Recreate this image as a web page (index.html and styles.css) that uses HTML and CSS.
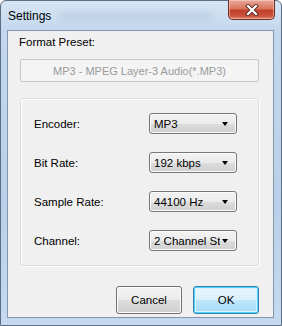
FILE: index.html
```html
<!DOCTYPE html>
<html>
<head>
<meta charset="utf-8">
<link rel="stylesheet" href="styles.css">
</head>
<body>
<div class="window">
  <div class="titlebar">
    <span class="title">Settings</span>
    <span class="title-blur"></span>
    <div class="close-btn">
      <svg width="14" height="12" viewBox="0 0 14 12">
        <path d="M3 2 L11 10 M11 2 L3 10" stroke="#5a2a22" stroke-width="4" stroke-linecap="square" fill="none"/>
        <path d="M3 2 L11 10 M11 2 L3 10" stroke="#ffffff" stroke-width="2.2" stroke-linecap="square" fill="none"/>
      </svg>
    </div>
  </div>
  <div class="client">
    <div class="preset-label">Format Preset:</div>
    <div class="preset-box">MP3 - MPEG Layer-3 Audio(*.MP3)</div>
    <div class="group">
      <div class="row">
        <span class="label">Encoder:</span>
        <div class="combo"><span class="combo-text">MP3</span><span class="arrow"></span></div>
      </div>
      <div class="row">
        <span class="label">Bit Rate:</span>
        <div class="combo"><span class="combo-text">192 kbps</span><span class="arrow"></span></div>
      </div>
      <div class="row">
        <span class="label">Sample Rate:</span>
        <div class="combo"><span class="combo-text">44100 Hz</span><span class="arrow"></span></div>
      </div>
      <div class="row">
        <span class="label">Channel:</span>
        <div class="combo"><span class="combo-text">2 Channel Stereo</span><span class="arrow"></span></div>
      </div>
    </div>
    <div class="buttons">
      <div class="btn">Cancel</div>
      <div class="btn btn-default">OK</div>
    </div>
  </div>
</div>
</body>
</html>
```

FILE: styles.css
```css
* { box-sizing: border-box; }
html, body {
  margin: 0;
  padding: 0;
  background: #ffffff;
}
body {
  font-family: "Liberation Sans", Arial, sans-serif;
  font-size: 11px;
  color: #1a1a1a;
}
.window {
  width: 282px;
  height: 326px;
  border: 1px solid #5b6f84;
  border-radius: 6px 6px 0 0;
  background: linear-gradient(180deg, #d6e5f4 0px, #c3d8ee 30px, #b8d0e9 200px, #c5daf0 326px);
  display: flex;
  flex-direction: column;
  padding: 0 7px 7px 6px;
}
.titlebar {
  height: 29px;
  display: flex;
  align-items: flex-start;
  position: relative;
}
.title {
  font-size: 12px;
  color: #000;
  margin-top: 8px;
  margin-left: 1px;
  line-height: 14px;
}
.title-blur {
  display: block;
  width: 150px;
  height: 9px;
  margin-top: 11px;
  margin-left: 10px;
  background: rgba(160, 180, 205, 0.3);
  filter: blur(3px);
}
.close-btn {
  position: absolute;
  right: -1px;
  top: -1px;
  width: 47px;
  height: 20px;
  border: 1px solid #6e2c22;
  border-top: none;
  border-radius: 0 0 5px 5px;
  background: linear-gradient(180deg, #e9a99a 0%, #d9745f 45%, #c2402a 55%, #c9533c 85%, #e08b70 100%);
  box-shadow: inset 0 0 0 1px rgba(255, 220, 210, 0.5);
  display: flex;
  align-items: center;
  justify-content: center;
}
.client {
  flex: 1;
  border: 1px solid #8396ab;
  background: #f0f0f0;
  display: flex;
  flex-direction: column;
  padding: 0 14px 0 11px;
}
.preset-label {
  margin-top: 4px;
  line-height: 14px;
  height: 14px;
  font-size: 11.5px;
  color: #000;
}
.preset-box {
  margin-top: 10px;
  margin-left: 1px;
  height: 23px;
  border: 1px solid #c4c8cc;
  border-radius: 2px;
  background: #f4f4f4;
  color: #9a9a9a;
  display: flex;
  align-items: center;
  justify-content: center;
  font-size: 11px;
}
.group {
  margin-top: 16px;
  margin-left: 1px;
  height: 168px;
  border: 1px solid #d8dde2;
  border-radius: 3px;
  box-shadow: inset 1px 1px 0 #ffffff, 1px 1px 0 #ffffff;
  display: flex;
  flex-direction: column;
  gap: 18px;
  padding: 14px 21px 0 13px;
}
.row {
  height: 21px;
  display: flex;
  align-items: center;
  justify-content: space-between;
}
.label {
  font-size: 11.5px;
  color: #000;
}
.combo {
  width: 88px;
  height: 21px;
  border: 1px solid #777777;
  border-radius: 3px;
  background: linear-gradient(180deg, #f3f3f3 0%, #ebebeb 50%, #dddddd 51%, #cfcfcf 100%);
  box-shadow: inset 0 0 0 1px #fbfbfb;
  display: flex;
  align-items: center;
  position: relative;
  overflow: hidden;
}
.combo-text {
  padding-left: 4px;
  white-space: nowrap;
  overflow: hidden;
  width: 70px;
  font-size: 11.5px;
  color: #000;
}
.arrow {
  position: absolute;
  right: 8px;
  top: 8px;
  width: 0;
  height: 0;
  border-left: 3.5px solid transparent;
  border-right: 3.5px solid transparent;
  border-top: 4px solid #000;
}
.buttons {
  margin-top: 20px;
  display: flex;
  justify-content: flex-end;
  gap: 11px;
}
.btn {
  width: 66px;
  height: 28px;
  border: 1px solid #707070;
  border-radius: 3px;
  background: linear-gradient(180deg, #f2f2f2 0%, #ebebeb 50%, #dddddd 51%, #cfcfcf 100%);
  box-shadow: inset 0 0 0 1px #fcfcfc;
  display: flex;
  align-items: center;
  justify-content: center;
  font-size: 11.5px;
  color: #000;
}
.btn-default {
  border-color: #3c7fb1;
  background: linear-gradient(180deg, #eaf6fd 0%, #d9f0fc 50%, #bee6fd 51%, #a7d9f5 100%);
  box-shadow: inset 0 0 0 1px #48d5f9, inset 0 0 0 2px #d8f2fd;
}
```
